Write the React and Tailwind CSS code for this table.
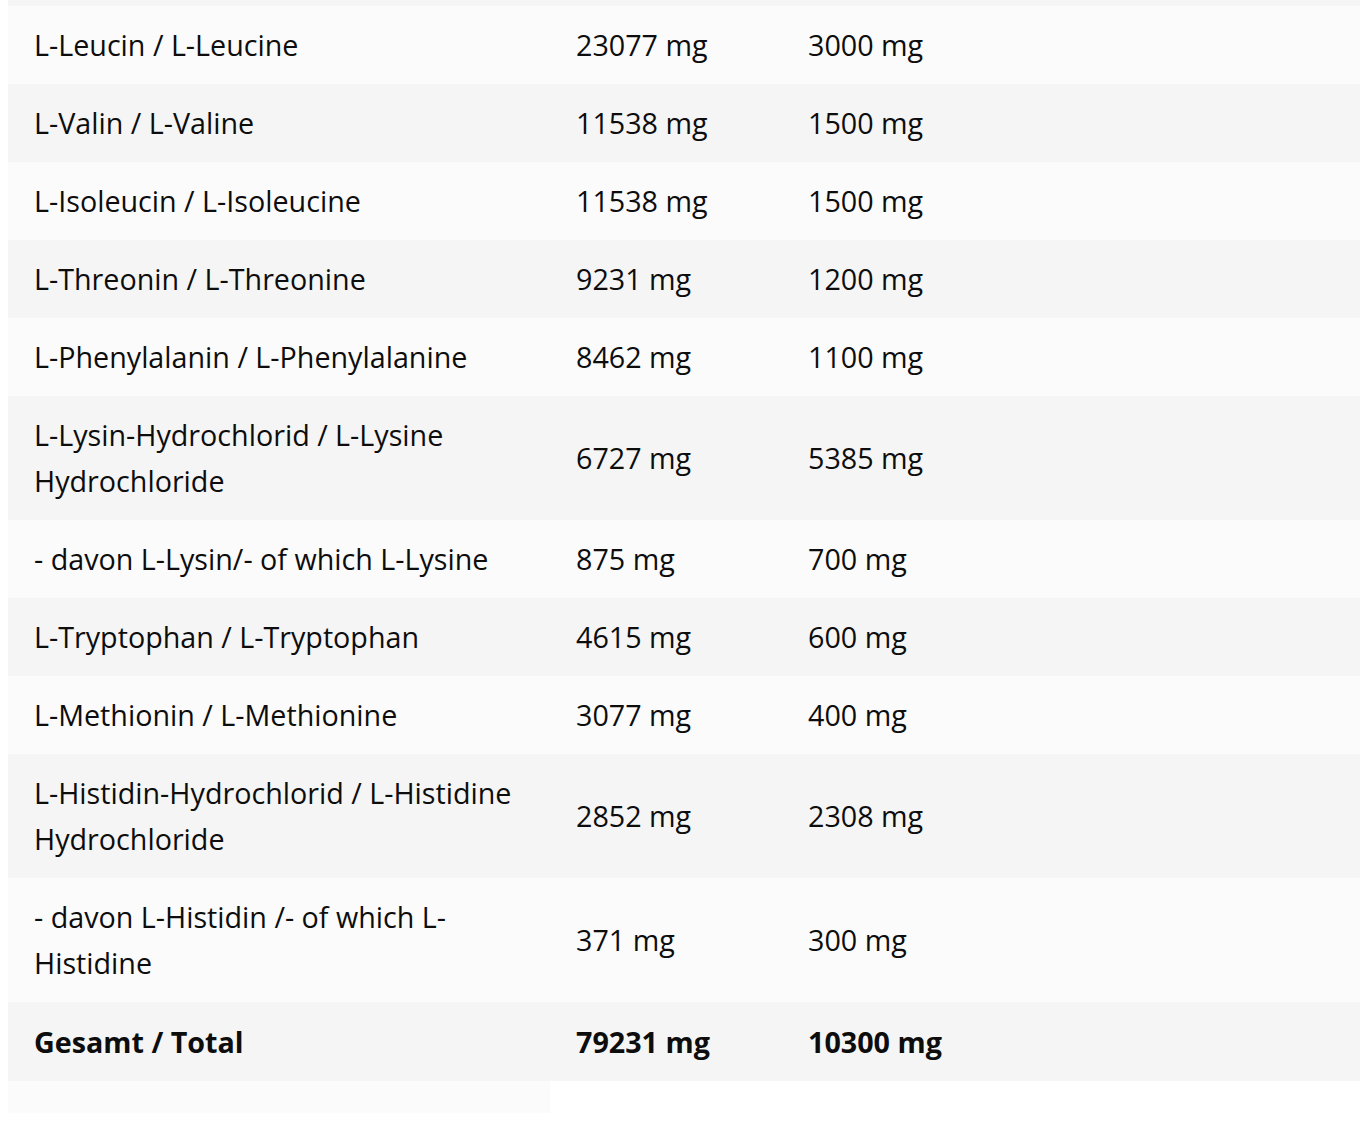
import React from "react";

const rows = [
  ["L-Leucin / L-Leucine", "23077 mg", "3000 mg"],
  ["L-Valin / L-Valine", "11538 mg", "1500 mg"],
  ["L-Isoleucin / L-Isoleucine", "11538 mg", "1500 mg"],
  ["L-Threonin / L-Threonine", "9231 mg", "1200 mg"],
  ["L-Phenylalanin / L-Phenylalanine", "8462 mg", "1100 mg"],
  ["L-Lysin-Hydrochlorid / L-Lysine Hydrochloride", "6727 mg", "5385 mg"],
  ["- davon L-Lysin/- of which L-Lysine", "875 mg", "700 mg"],
  ["L-Tryptophan / L-Tryptophan", "4615 mg", "600 mg"],
  ["L-Methionin / L-Methionine", "3077 mg", "400 mg"],
  ["L-Histidin-Hydrochlorid / L-Histidine Hydrochloride", "2852 mg", "2308 mg"],
  ["- davon L-Histidin /- of which L-Histidine", "371 mg", "300 mg"],
];

export default function App() {
  return (
    <div className="bg-white min-h-[1138px] pl-2 pr-[10px] text-[28.7px] leading-[46px] text-[#0d0d0d]" style={{ fontFamily: '"Open Sans", sans-serif' }}>
      <div className="h-[6px] bg-[#f5f5f5]" />
      <table className="w-full border-collapse table-fixed">
        <colgroup>
          <col className="w-[542px]" />
          <col className="w-[232px]" />
          <col />
        </colgroup>
        <tbody>
          {rows.map((r, i) => (
            <tr key={i} className={i % 2 === 0 ? "bg-[#fbfbfb]" : "bg-[#f5f5f5]"}>
              <td className="pl-[26px] pr-[26px] py-4 align-middle">{r[0]}</td>
              <td className="pl-[26px] py-4 align-middle">{r[1]}</td>
              <td className="pl-[26px] py-4 align-middle">{r[2]}</td>
            </tr>
          ))}
          <tr className="bg-[#f5f5f5] font-bold">
            <td className="pl-[26px] pt-[17px] pb-4">Gesamt / Total</td>
            <td className="pl-[26px] pt-[17px] pb-4">79231 mg</td>
            <td className="pl-[26px] pt-[17px] pb-4">10300 mg</td>
          </tr>
        </tbody>
      </table>
      <div className="w-[542px] h-[32px] bg-[#fbfbfb]" />
    </div>
  );
}
